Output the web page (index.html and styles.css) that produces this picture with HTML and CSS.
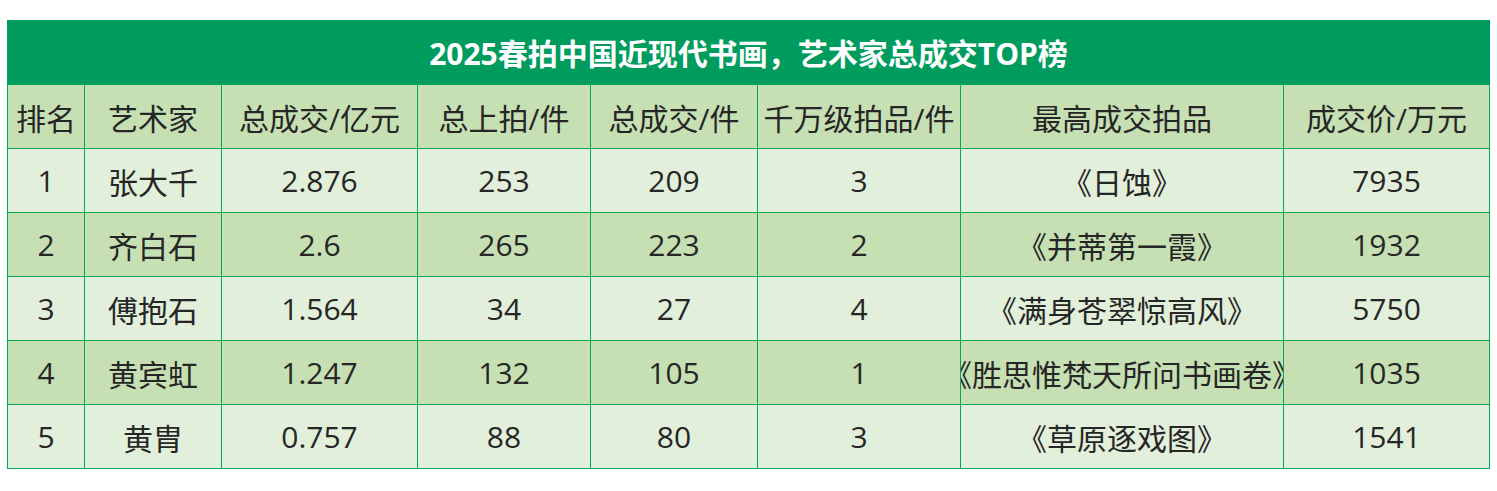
FILE: index.html
```html
<!DOCTYPE html>
<html lang="zh-CN">
<head>
<meta charset="utf-8">
<title>2025春拍中国近现代书画，艺术家总成交TOP榜</title>
<link rel="stylesheet" href="styles.css">
</head>
<body>
<div class="board">
  <div class="title">2025春拍中国近现代书画，艺术家总成交TOP榜</div>

  <div class="cell head">排名</div>
  <div class="cell head">艺术家</div>
  <div class="cell head">总成交/亿元</div>
  <div class="cell head">总上拍/件</div>
  <div class="cell head">总成交/件</div>
  <div class="cell head">千万级拍品/件</div>
  <div class="cell head">最高成交拍品</div>
  <div class="cell head">成交价/万元</div>

  <div class="cell odd">1</div>
  <div class="cell odd">张大千</div>
  <div class="cell odd">2.876</div>
  <div class="cell odd">253</div>
  <div class="cell odd">209</div>
  <div class="cell odd">3</div>
  <div class="cell odd"><span>《日蚀》</span></div>
  <div class="cell odd">7935</div>

  <div class="cell even">2</div>
  <div class="cell even">齐白石</div>
  <div class="cell even">2.6</div>
  <div class="cell even">265</div>
  <div class="cell even">223</div>
  <div class="cell even">2</div>
  <div class="cell even"><span>《并蒂第一霞》</span></div>
  <div class="cell even">1932</div>

  <div class="cell odd">3</div>
  <div class="cell odd">傅抱石</div>
  <div class="cell odd">1.564</div>
  <div class="cell odd">34</div>
  <div class="cell odd">27</div>
  <div class="cell odd">4</div>
  <div class="cell odd"><span>《满身苍翠惊高风》</span></div>
  <div class="cell odd">5750</div>

  <div class="cell even">4</div>
  <div class="cell even">黄宾虹</div>
  <div class="cell even">1.247</div>
  <div class="cell even">132</div>
  <div class="cell even">105</div>
  <div class="cell even">1</div>
  <div class="cell even"><span>《胜思惟梵天所问书画卷》</span></div>
  <div class="cell even">1035</div>

  <div class="cell odd">5</div>
  <div class="cell odd">黄胄</div>
  <div class="cell odd">0.757</div>
  <div class="cell odd">88</div>
  <div class="cell odd">80</div>
  <div class="cell odd">3</div>
  <div class="cell odd"><span>《草原逐戏图》</span></div>
  <div class="cell odd">1541</div>
</div>
</body>
</html>
```

FILE: styles.css
```css
html, body {
  margin: 0;
  padding: 0;
  background: #ffffff;
}

body {
  padding: 20px 0 0 7px;
  font-family: "Open Sans", "Noto Sans CJK SC", sans-serif;
  color: #262626;
}

.board {
  display: grid;
  grid-template-columns: 76px 136px 195px 172px 166px 202px 322px 205px;
  grid-auto-rows: 63px;
  gap: 1px;
  width: max-content;
  background: #00a65a;
  border: 1px solid #00a65a;
}

.title {
  grid-column: 1 / -1;
  background: #009c5e;
  color: #ffffff;
  font-size: 30px;
  font-weight: 700;
  display: flex;
  align-items: center;
  justify-content: center;
  margin: -1px -1px 0 -1px;
}

.cell {
  display: flex;
  align-items: center;
  justify-content: center;
  overflow: hidden;
  white-space: nowrap;
  font-size: 30px;
}

.cell span {
  flex: none;
}

.head,
.even {
  background: #c6e0b4;
}

.odd {
  background: #e2efda;
}
```
